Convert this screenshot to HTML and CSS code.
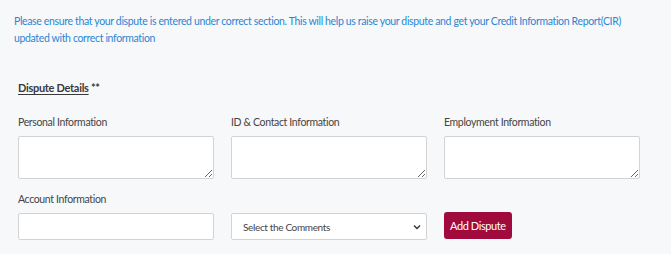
FILE: index.html
```html
<!DOCTYPE html>
<html lang="en">
<head>
    <meta charset="UTF-8">
    <title>Raise Dispute</title>
    <link rel="stylesheet" href="styles.css">
</head>
<body>
<p class="notice">Please ensure that your dispute is entered under correct section. This will help us raise your dispute and get your Credit Information Report(CIR)<br>updated with correct information</p>

<div class="section">
    <h4 class="title"><span class="title-text">Dispute Details</span> **</h4>

    <div class="grid">
        <div class="field">
            <label class="label">Personal Information</label>
            <textarea class="box"></textarea>
        </div>
        <div class="field">
            <label class="label">ID &amp; Contact Information</label>
            <textarea class="box"></textarea>
        </div>
        <div class="field">
            <label class="label">Employment Information</label>
            <textarea class="box"></textarea>
        </div>

        <div class="field">
            <label class="label">Account Information</label>
            <input class="input" type="text">
        </div>
        <div class="field field-end">
            <div class="select-wrap">
                <select class="select">
                    <option>Select the Comments</option>
                </select>
                <svg class="chevron" width="8" height="6" viewBox="0 0 8 6"><path d="M1 1.5 L4 4.5 L7 1.5" fill="none" stroke="#333" stroke-width="1.4"/></svg>
            </div>
        </div>
        <div class="field field-end">
            <button class="btn">Add Dispute</button>
        </div>
    </div>
</div>
</body>
</html>
```

FILE: styles.css
```css
html, body {
    margin: 0;
    background: #f7f8fa;
    font-family: Lato, "Open Sans", sans-serif;
}
.notice {
    margin: 0;
    padding: 13px 14px 0;
    color: #2a86d2;
    font-size: 10.5px;
    line-height: 17px;
    letter-spacing: -0.35px;
}
.section {
    padding: 0 18px;
}
.title {
    margin: 33px 0 0;
    font-size: 11px;
    line-height: 16px;
    font-weight: 700;
    color: #3a3a3a;
    letter-spacing: -0.3px;
}
.title-text {
    text-decoration: underline;
    text-underline-offset: 2px;
}
.grid {
    display: grid;
    grid-template-columns: 196px 196px 196px;
    column-gap: 17px;
    row-gap: 13px;
    margin-top: 19px;
}
.field {
    display: flex;
    flex-direction: column;
}
.field-end {
    justify-content: flex-end;
}
.label {
    font-size: 10.5px;
    line-height: 14px;
    color: #444;
    letter-spacing: -0.35px;
    margin-bottom: 7px;
}
.box {
    box-sizing: border-box;
    height: 43px;
    width: 196px;
    margin: 0;
    background: #fff;
    border: 1px solid #d3d3d3;
    border-radius: 2px;
}
.input {
    box-sizing: border-box;
    height: 27px;
    width: 196px;
    margin: 0;
    background: #fff;
    border: 1px solid #d3d3d3;
    border-radius: 2px;
}
.select-wrap {
    position: relative;
}
.select {
    box-sizing: border-box;
    appearance: none;
    -webkit-appearance: none;
    height: 27px;
    width: 196px;
    margin: 0;
    padding: 0 11px;
    background: #fff;
    border: 1px solid #d3d3d3;
    border-radius: 2px;
    font-family: Lato, "Open Sans", sans-serif;
    font-size: 10px;
    letter-spacing: -0.35px;
    color: #444;
}
.chevron {
    position: absolute;
    right: 6px;
    top: 11px;
}
.btn {
    align-self: flex-start;
    height: 27px;
    margin-bottom: 1px;
    padding: 0 6px;
    background: #a10a3c;
    color: #fff;
    border: 0;
    border-radius: 3px;
    font-family: Lato, "Open Sans", sans-serif;
    font-size: 11px;
    letter-spacing: -0.4px;
}
```
